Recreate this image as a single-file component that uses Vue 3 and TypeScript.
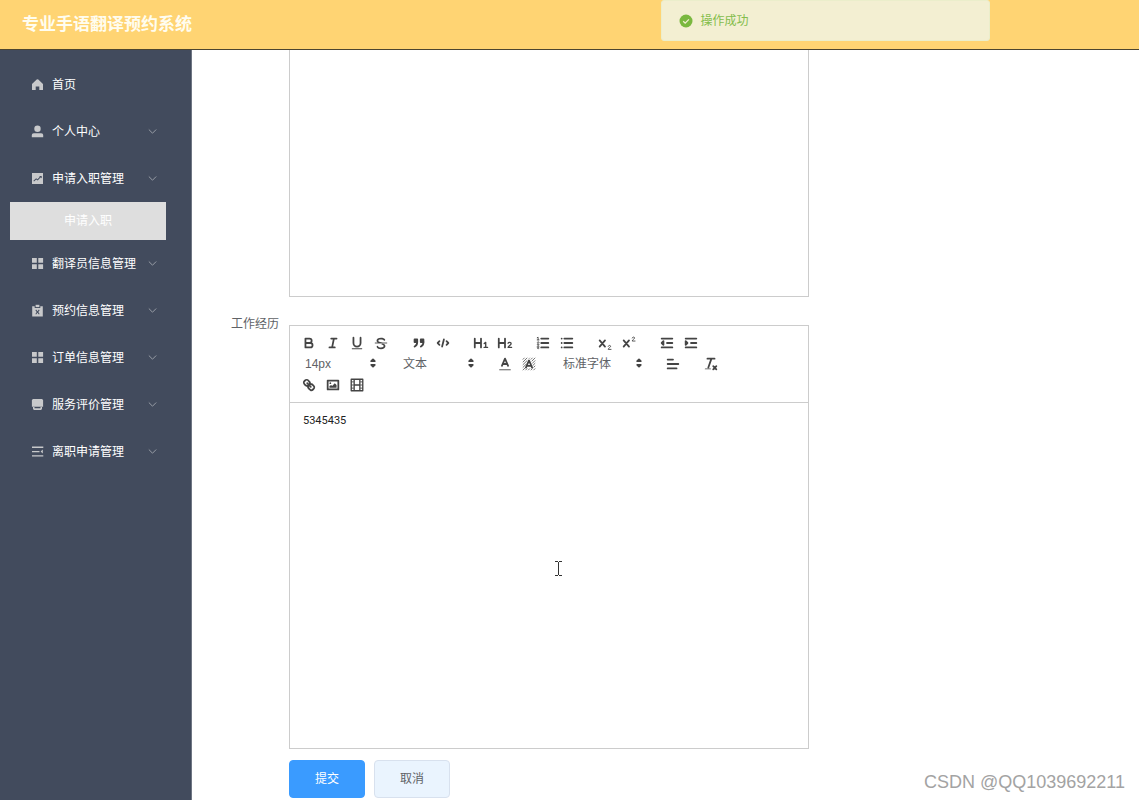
<script setup lang="ts">
import { ref } from 'vue'

interface MenuItem {
  title: string
  icon: string
  children?: string[]
}

interface Tool {
  name: string
  icon: string
}

const menu: MenuItem[] = [
  { title: '首页', icon: 'home' },
  { title: '个人中心', icon: 'user', children: ['个人信息'] },
  { title: '申请入职管理', icon: 'chart', children: ['申请入职'] },
  { title: '翻译员信息管理', icon: 'grid', children: ['翻译员信息'] },
  { title: '预约信息管理', icon: 'clip', children: ['预约信息'] },
  { title: '订单信息管理', icon: 'grid', children: ['订单信息'] },
  { title: '服务评价管理', icon: 'service', children: ['服务评价'] },
  { title: '离职申请管理', icon: 'list', children: ['离职申请'] },
]
const openMenu = ref('申请入职管理')

const menuIcons: Record<string, string> = {
  home: '<path d="M6.500 1.200Q6.900 1.200 7.300 1.600L12 6V12H8.300V8.500H4.700V12H1V6L5.700 1.600Q6.100 1.200 6.500 1.200z"/>',
  user: '<circle cx="6.500" cy="3.800" r="3.200"/><path d="M.8 12.300V10Q.8 8.200 2.800 8.200h7.400q2 0 2 1.800v2.300z"/>',
  chart: '<path fill-rule="evenodd" d="M1 1h11v11H1zM2.400 8.700l.6.8 2.200-2 1.500 1 3-3.200.2 1 .8-.2V3.900H8.300v.7h.8L6.500 7.300 5.100 6.300z"/>',
  grid: '<path d="M1 1h4.800v4.800H1zM7.300 1h4.800v4.800H7.300zM1 7.300h4.800v4.800H1zM7.300 7.300h4.800v4.800H7.300z"/>',
  clip: '<path fill-rule="evenodd" d="M1.200 2.200H3.700V4H9.300V2.200h2.500v10.300H1.200zM4.400 6.200 5.700 8 4.400 9.900 5.100 10.500 6.500 8.800 7.900 10.500 8.600 9.900 7.300 8 8.600 6.200 7.900 5.600 6.500 7.300 5.100 5.600z"/><path d="M4.600.8h3.800v2.300H4.600z"/>',
  service: '<path d="M2 1h9l1.100 1v6.800H.9V2z"/><path d="M2 9h1.500v1.200h6V9H11v2L10 12H3L2 11z"/>',
  list: '<path d="M1 1.600h11.300v1.300H1zM1 5.900h7.500v1.300H1zM1 10.200h11.300v1.300H1zM11.800 4.600v3.900L9.600 6.500z"/>',
}

const icons: Record<string, string> = {
  bold: '<path class="st" d="M5 4h4.500a2.500 2.500 0 0 1 0 5H5zM5 9h5.500a2.500 2.500 0 0 1 0 5H5z"/>',
  italic: '<path class="st" d="M7 4h6M5 14h6M8 14l2-10"/>',
  underline: '<path class="st" d="M5 3v6a4.012 4.012 0 0 0 4 4 4.012 4.012 0 0 0 4-4V3"/><rect class="fl" x="3" y="15" width="12" height="1" rx=".5"/>',
  strike: '<path class="st thin" d="M2.500 9h13"/><path class="fl" d="M6.500 9c-.24 0-.49-.02-.74-.09C4.640 8.500 4 7.600 4 6.300 4 4.100 5.900 3 9 3c2.200 0 4 .6 4.700 2.200.2.500-.1 1-.5 1.200-.5.200-1 0-1.200-.5C11.500 5.200 10.700 5 9 5 7 5 6 5.400 6 6.400c0 .7.400 1.100 1.200 1.300L11 9zM10 9.500c2.500.3 4 1.300 4 3 0 2.300-2 3.500-5 3.500-2.400 0-4.200-.8-4.900-2.500-.2-.5 0-1 .5-1.200.5-.2 1 0 1.300.5C6.300 13.700 7.300 14 9 14c2 0 3-.5 3-1.500 0-.8-.7-1.400-2.500-1.800z"/>',
  quote: '<path class="fl st" d="M4 5h3v3H4zM11 5h3v3h-3z"/><path class="st" d="M7 8c0 4.031-3 5-3 5M14 8c0 4.031-3 5-3 5"/>',
  code: '<path class="st" d="M5 7 3 9l2 2M13 7l2 2-2 2M10 5l-2 8"/>',
  h1: '<path class="fl" d="M10 4v10a1 1 0 0 1-2 0v-4H3v4a1 1 0 0 1-2 0V4a1 1 0 0 1 2 0v4h5V4a1 1 0 0 1 2 0z"/><path class="st mid" d="M12.600 9.600 14.300 8.300V14M12.500 14h3.900"/>',
  h2: '<path class="fl" d="M9 3a1 1 0 0 0-1 1v4H3V4a1 1 0 0 0-2 0v10a1 1 0 0 0 2 0v-4h5v4a1 1 0 0 0 2 0V4a1 1 0 0 0-1-1z"/><path class="st mid" d="M12.400 9.300c.7-1.400 3.500-1.300 3.500.5 0 1.700-3.300 2.300-3.400 4.200h3.900"/>',
  ordered: '<path class="st" d="M7 4h8M7 9h8M7 14h8"/><path class="st thin" d="M2.500 5.500h2M3.500 5.500v-3l-1 .5M4.500 10.500h-2c0-1 2-1.200 2-2.100 0-1.200-2-1-2 0M2.500 14.800c.3 1 2 .8 2-.2s-2-1-2-1 2 0 2-1-1.800-1-2-.2"/>',
  bullet: '<path class="st" d="M6 4h9M6 9h9M6 14h9M3 4h0M3 9h0M3 14h0"/>',
  sub: '<path class="st" d="M3 6l6 7M9 6l-6 7"/><path class="st thin" d="M12.600 12.700c.3-1.400 2.700-1.300 2.700.1 0 1.200-2.600 1.700-2.700 3.400h3.200"/>',
  sup: '<path class="st" d="M3 6l6 7M9 6l-6 7"/><path class="st thin" d="M12.600 3.300c.3-1.400 2.700-1.300 2.700.1 0 1.200-2.600 1.700-2.700 3.400h3.200"/>',
  outdent: '<path class="st" d="M3 14h12M3 4h12M9 9h6"/><path class="st fl" d="M5 7v4L3 9z"/>',
  indent: '<path class="st" d="M3 14h12M3 4h12M9 9h6"/><path class="st fl" d="M3 7v4l2-2z"/>',
  color: '<path class="st thin" d="M3 15.500h12"/><path class="st" d="M5.500 11 9 3l3.500 8M11.630 9H6.380"/>',
  background: '<path class="hatch" d="M2 4l2-2M2 7l5-5M2 10l5-5M2 13l4-4M2 16l3-3M9 3l1-1M11 4l2-2M12 6l4-4M12.500 8.500 16 5M13 11l3-3M14 13l2-2M5 16l2-2M8 16l2-2M11 16l2-2M14 16l2-2"/><path class="st" d="M5.500 13 9 5l3.500 8M11.630 11H6.380"/>',
  align: '<path class="st" d="M3 9h12M3 14h10M3 4h6"/>',
  clean: '<path class="st" d="M5 3h8M6 13 9.500 3M11.500 11.500l3.500 3.500M15 11.500l-3.500 3.500"/><rect class="fl" x="2" y="14" width="7" height="1" rx=".5"/>',
  link: '<path class="st" d="M7 7l4 4M8.900 4.577a3.476 3.476 0 0 1 .360 4.679 3.476 3.476 0 0 1-4.679-.360C3.185 7.500 2.035 6.400 4.217 4.217S7.500 3.185 8.900 4.577zM13.423 9.100a3.476 3.476 0 0 0-4.679-.360 3.476 3.476 0 0 0 .360 4.679c1.392 1.392 2.500 2.542 4.679.360s1.035-3.287-.360-4.679z"/>',
  image: '<rect class="st" x="3" y="4" width="12" height="10"/><circle class="fl" cx="6" cy="7" r="1"/><path class="fl" d="M5 10v2h8V9l-2-2-3 3-1-1z"/>',
  video: '<rect class="st mid" x="2.500" y="2.500" width="13" height="13"/><path class="st mid" d="M5.800 3v12M12.200 3v12M6 9h6"/><path class="st thin" d="M3 5.500h2M3 9h2M3 12.500h2M13 5.500h2M13 9h2M13 12.500h2"/>',
}

const topGroups: Tool[][] = [
  [
    { name: '加粗', icon: 'bold' },
    { name: '斜体', icon: 'italic' },
    { name: '下划线', icon: 'underline' },
    { name: '删除线', icon: 'strike' },
  ],
  [{ name: '引用', icon: 'quote' }, { name: '代码', icon: 'code' }],
  [{ name: '一级标题', icon: 'h1' }, { name: '二级标题', icon: 'h2' }],
  [{ name: '有序列表', icon: 'ordered' }, { name: '无序列表', icon: 'bullet' }],
  [{ name: '下标', icon: 'sub' }, { name: '上标', icon: 'sup' }],
  [{ name: '减少缩进', icon: 'outdent' }, { name: '增加缩进', icon: 'indent' }],
]
const colorGroup: Tool[] = [{ name: '文字颜色', icon: 'color' }, { name: '背景颜色', icon: 'background' }]
const endGroups: Tool[][] = [
  [{ name: '对齐', icon: 'align' }],
  [{ name: '清除格式', icon: 'clean' }],
  [{ name: '链接', icon: 'link' }, { name: '图片', icon: 'image' }, { name: '视频', icon: 'video' }],
]

const size = ref('14px')
const heading = ref('文本')
const font = ref('标准字体')
const experience = ref('5345435')
</script>

<template>
  <div class="page">
    <header class="header">
      <h1>专业手语翻译预约系统</h1>
    </header>
    <div class="body">
      <nav class="sidebar">
        <template v-for="item in menu" :key="item.title">
          <button class="item" type="button" @click="openMenu = item.title">
            <svg class="item-icon" viewBox="0 0 13 13" v-html="menuIcons[item.icon]"></svg>
            <span>{{ item.title }}</span>
            <svg v-if="item.children" class="chevron" viewBox="0 0 9 9"><path d="M.8 2.500 4.500 6.200 8.200 2.500" /></svg>
          </button>
          <template v-if="item.children && openMenu === item.title">
            <a v-for="child in item.children" :key="child" class="sub-item" href="#">{{ child }}</a>
          </template>
        </template>
      </nav>

      <main class="main">
        <div class="row">
          <div class="label"></div>
          <div class="previous" contenteditable="true" aria-label="个人简介"></div>
        </div>
        <div class="row">
          <label class="label" for="experience">工作经历</label>
          <div class="editor">
            <div class="toolbar">
              <span v-for="(group, i) in topGroups" :key="i" class="group">
                <button v-for="tool in group" :key="tool.icon" class="tool" type="button" :aria-label="tool.name">
                  <svg viewBox="0 0 18 18" v-html="icons[tool.icon]"></svg>
                </button>
              </span>
              <span class="group picker">
                <select v-model="size" aria-label="字号"><option>14px</option><option>16px</option></select>
                <svg class="arrows" viewBox="0 0 18 18"><path d="M7 11l2 2 2-2zM7 7l2-2 2 2z" /></svg>
              </span>
              <span class="group picker">
                <select v-model="heading" aria-label="段落"><option>文本</option><option>标题</option></select>
                <svg class="arrows" viewBox="0 0 18 18"><path d="M7 11l2 2 2-2zM7 7l2-2 2 2z" /></svg>
              </span>
              <span class="group">
                <button v-for="tool in colorGroup" :key="tool.icon" class="tool" type="button" :aria-label="tool.name">
                  <svg viewBox="0 0 18 18" v-html="icons[tool.icon]"></svg>
                </button>
              </span>
              <span class="group picker wide">
                <select v-model="font" aria-label="字体"><option>标准字体</option><option>衬线字体</option></select>
                <svg class="arrows" viewBox="0 0 18 18"><path d="M7 11l2 2 2-2zM7 7l2-2 2 2z" /></svg>
              </span>
              <span v-for="(group, i) in endGroups" :key="'e' + i" class="group">
                <button v-for="tool in group" :key="tool.icon" class="tool" type="button" :aria-label="tool.name">
                  <svg viewBox="0 0 18 18" v-html="icons[tool.icon]"></svg>
                </button>
              </span>
            </div>
            <textarea id="experience" v-model="experience" class="content"></textarea>
          </div>
        </div>
        <div class="actions">
          <button class="btn primary" type="button">提交</button>
          <button class="btn" type="button">取消</button>
        </div>
      </main>
    </div>

    <div class="toast" role="status">
      <svg viewBox="0 0 14 14"><circle cx="7" cy="7" r="6.500" /><path d="M4.200 7.200 6.200 9.100 9.900 5.400" /></svg>
      <span>操作成功</span>
    </div>
    <svg class="pointer" viewBox="0 0 7 15"><path d="M0 .5h3M4 .5h3M3.500 1v13M0 14.500h3M4 14.500h3" /></svg>
    <div class="watermark">CSDN @QQ1039692211</div>
  </div>
</template>

<style>
body {
  margin: 0;
}
</style>

<style scoped>
.page {
  position: relative;
  display: flex;
  flex-direction: column;
  height: 100vh;
  overflow: hidden;
  background: #fff;
  color: #606266;
  font: 12px/20px "Liberation Sans", "Noto Sans CJK SC", sans-serif;
}
button,
select,
textarea {
  font: inherit;
  color: inherit;
  border: 0;
  padding: 0;
  margin: 0;
  background: none;
}
.header {
  flex: none;
  display: flex;
  align-items: center;
  height: 49px;
  padding: 0 22px;
  background: #ffd473;
  border-bottom: 1px solid #4d452f;
}
.header h1 {
  margin: 0;
  font-size: 17px;
  line-height: 24px;
  font-weight: 700;
  color: #fffdf0;
}
.body {
  flex: 1;
  display: flex;
  min-height: 0;
}
.sidebar {
  flex: none;
  display: flex;
  flex-direction: column;
  width: 191px;
  padding-top: 11px;
  background: #424b5d;
  border-right: 1px solid #6f7683;
}
.item {
  display: flex;
  align-items: center;
  gap: 8px;
  height: 47px;
  padding: 0 34px 0 31px;
  color: #fff;
  text-align: left;
  white-space: nowrap;
}
.item span {
  flex: 1;
}
.item-icon {
  width: 13px;
  height: 13px;
  fill: #c8c9cb;
}
.chevron {
  width: 9px;
  height: 9px;
  margin-left: -8px;
  fill: none;
  stroke: #989da6;
}
.sub-item {
  margin: 0 25px 0 10px;
  background: #dedede;
  color: #fff;
  line-height: 38px;
  text-align: center;
  text-decoration: none;
}
.main {
  flex: 1;
  min-width: 0;
  padding-right: 20px;
  overflow: hidden;
}
.row {
  display: flex;
  gap: 10px;
  margin-bottom: 9px;
}
.label {
  flex: none;
  width: 87px;
  line-height: 34px;
  text-align: right;
}
.previous {
  flex: 0 1 518px;
  height: 246px;
  border: 1px solid #ccc;
  border-top: 0;
}
.row + .row {
  margin-top: 10px;
}
.editor {
  flex: 0 1 518px;
  margin-top: 18px;
  border: 1px solid #ccc;
}
.toolbar {
  display: flex;
  flex-wrap: wrap;
  padding: 6px 6px 7px 7px;
  border-bottom: 1px solid #ccc;
}
.group {
  display: flex;
  height: 21px;
  margin-right: 14px;
}
.tool {
  display: flex;
  align-items: center;
  justify-content: center;
  width: 24px;
  height: 21px;
}
.tool svg {
  width: 16px;
  height: 16px;
}
.tool :deep(.st) {
  fill: none;
  stroke: #444;
  stroke-width: 2;
  stroke-linecap: round;
  stroke-linejoin: round;
}
.tool :deep(.mid) {
  stroke-width: 1.500;
}
.tool :deep(.thin) {
  stroke-width: 1;
}
.tool :deep(.hatch) {
  fill: none;
  stroke: #666;
  stroke-width: 1;
}
.tool :deep(.fl) {
  fill: #444;
}
.picker {
  position: relative;
  width: 84px;
}
.picker.wide {
  width: 92px;
}
.picker select {
  width: 100%;
  padding-left: 8px;
  appearance: none;
  outline: 0;
}
.arrows {
  position: absolute;
  top: 2px;
  right: 0;
  width: 16px;
  height: 16px;
  fill: #444;
  stroke: #444;
  stroke-width: 2;
  stroke-linejoin: round;
  pointer-events: none;
}
.content {
  display: block;
  box-sizing: border-box;
  width: 100%;
  height: 345px;
  padding: 8px 13px;
  resize: none;
  outline: 0;
  color: #222;
  font: 11px/20px Roboto, "Noto Sans CJK SC", sans-serif;
}
.actions {
  display: flex;
  gap: 9px;
  padding: 2px 0 0 97px;
}
.btn {
  box-sizing: border-box;
  width: 76px;
  height: 38px;
  border: 1px solid #d8e1ee;
  border-radius: 4px;
  background: #eaf4fe;
}
.btn.primary {
  border-color: #3a9bff;
  background: #3a9bff;
  color: #fff;
}
.toast {
  position: absolute;
  top: 0;
  left: 58%;
  box-sizing: border-box;
  display: flex;
  align-items: center;
  gap: 8px;
  width: 329px;
  height: 41px;
  padding-left: 17px;
  border: 1px solid #ebeecb;
  border-radius: 3px;
  background: #f3efd2;
  color: #84bd4c;
}
.toast svg {
  width: 14px;
  height: 14px;
  fill: #7ab83f;
}
.toast path {
  fill: none;
  stroke: #f3efd2;
  stroke-width: 1.300;
}
.pointer {
  position: absolute;
  top: 561px;
  left: 555px;
  width: 7px;
  height: 15px;
  fill: none;
  stroke: #333;
}
.watermark {
  position: absolute;
  right: 14px;
  bottom: 8px;
  color: #a3a3a3;
  font-size: 18px;
}
</style>
